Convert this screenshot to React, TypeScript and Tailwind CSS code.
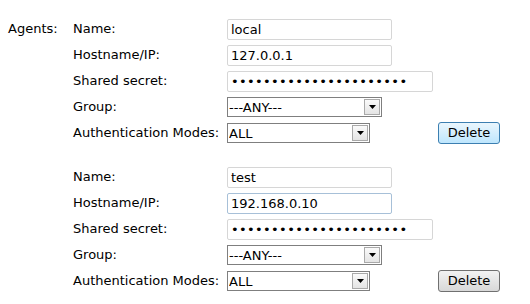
import React from 'react';

interface Agent {
  name: string;
  host: string;
  secret: string;
  group: string;
  auth: string;
  hostFocused?: boolean;
  deleteHover?: boolean;
}

const agents: Agent[] = [
  { name: 'local', host: '127.0.0.1', secret: 'xxxxxxxxxxxxxxxxxxxxxx', group: '---ANY---', auth: 'ALL', deleteHover: true },
  { name: 'test', host: '192.168.0.10', secret: 'xxxxxxxxxxxxxxxxxxxxxx', group: '---ANY---', auth: 'ALL', hostFocused: true },
];

const font = { fontFamily: '"DejaVu Sans", Verdana, sans-serif' };

const Select: React.FC<{ value: string; width: string }> = ({ value, width }) => (
  <div className={`relative h-[20px] ${width}`}>
    <select
      defaultValue={value}
      className="h-full w-full appearance-none border border-[#7f7f7f] bg-white pl-[1px] text-[13px] leading-none text-black outline-none"
      style={font}
    >
      <option>{value}</option>
    </select>
    <span className="pointer-events-none absolute right-[2px] top-[2px] flex h-[16px] w-[16px] items-center justify-center border border-[#a9a9a9] bg-gradient-to-b from-[#fafafa] to-[#e4e4e4]">
      <svg width="7" height="4" viewBox="0 0 7 4">
        <path d="M0 0h7L3.5 4z" fill="#000" />
      </svg>
    </span>
  </div>
);

const Input: React.FC<{ value: string; width: string; type?: string; focused?: boolean }> = ({
  value,
  width,
  type = 'text',
  focused,
}) => (
  <input
    type={type}
    defaultValue={value}
    className={`h-[21px] ${width} rounded-[2px] border bg-white px-[3px] text-[13px] text-black outline-none ${
      focused ? 'border-[#a7c0d8]' : 'border-[#d6d6d6]'
    } ${type === 'password' ? 'tracking-[0.35px]' : ''}`}
    style={font}
  />
);

const Row: React.FC<{ label: string; children: React.ReactNode; extra?: React.ReactNode }> = ({
  label,
  children,
  extra,
}) => (
  <div className="flex h-[26px] items-center">
    <div className="w-[154px] shrink-0">{label}</div>
    <div className="w-[211px] shrink-0">{children}</div>
    {extra}
  </div>
);

const AgentBlock: React.FC<{ agent: Agent }> = ({ agent }) => (
  <div>
    <Row label="Name:">
      <Input value={agent.name} width="w-[165px]" />
    </Row>
    <Row label="Hostname/IP:">
      <Input value={agent.host} width="w-[165px]" focused={agent.hostFocused} />
    </Row>
    <Row label="Shared secret:">
      <Input value={agent.secret} width="w-[206px]" type="password" />
    </Row>
    <Row label="Group:">
      <Select value={agent.group} width="w-[155px]" />
    </Row>
    <Row
      label="Authentication Modes:"
      extra={
        <button
          className={`h-[22px] w-[62px] rounded-[3px] border text-[13px] text-black ${
            agent.deleteHover
              ? 'border-[#3c7fb1] bg-gradient-to-b from-[#eaf6fd] to-[#bee6fd]'
              : 'border-[#707070] bg-gradient-to-b from-[#f2f2f2] to-[#d8d8d8]'
          }`}
          style={font}
        >
          Delete
        </button>
      }
    >
      <Select value={agent.auth} width="w-[143px]" />
    </Row>
  </div>
);

export default function App() {
  return (
    <div className="h-[304px] w-[530px] bg-white text-[13px] text-black" style={font}>
      <div className="flex pt-[16px] pl-[8px]">
        <div className="flex h-[26px] w-[65px] shrink-0 items-center">Agents:</div>
        <div className="flex flex-col gap-[18px]">
          {agents.map((a) => (
            <AgentBlock key={a.name} agent={a} />
          ))}
        </div>
      </div>
    </div>
  );
}
